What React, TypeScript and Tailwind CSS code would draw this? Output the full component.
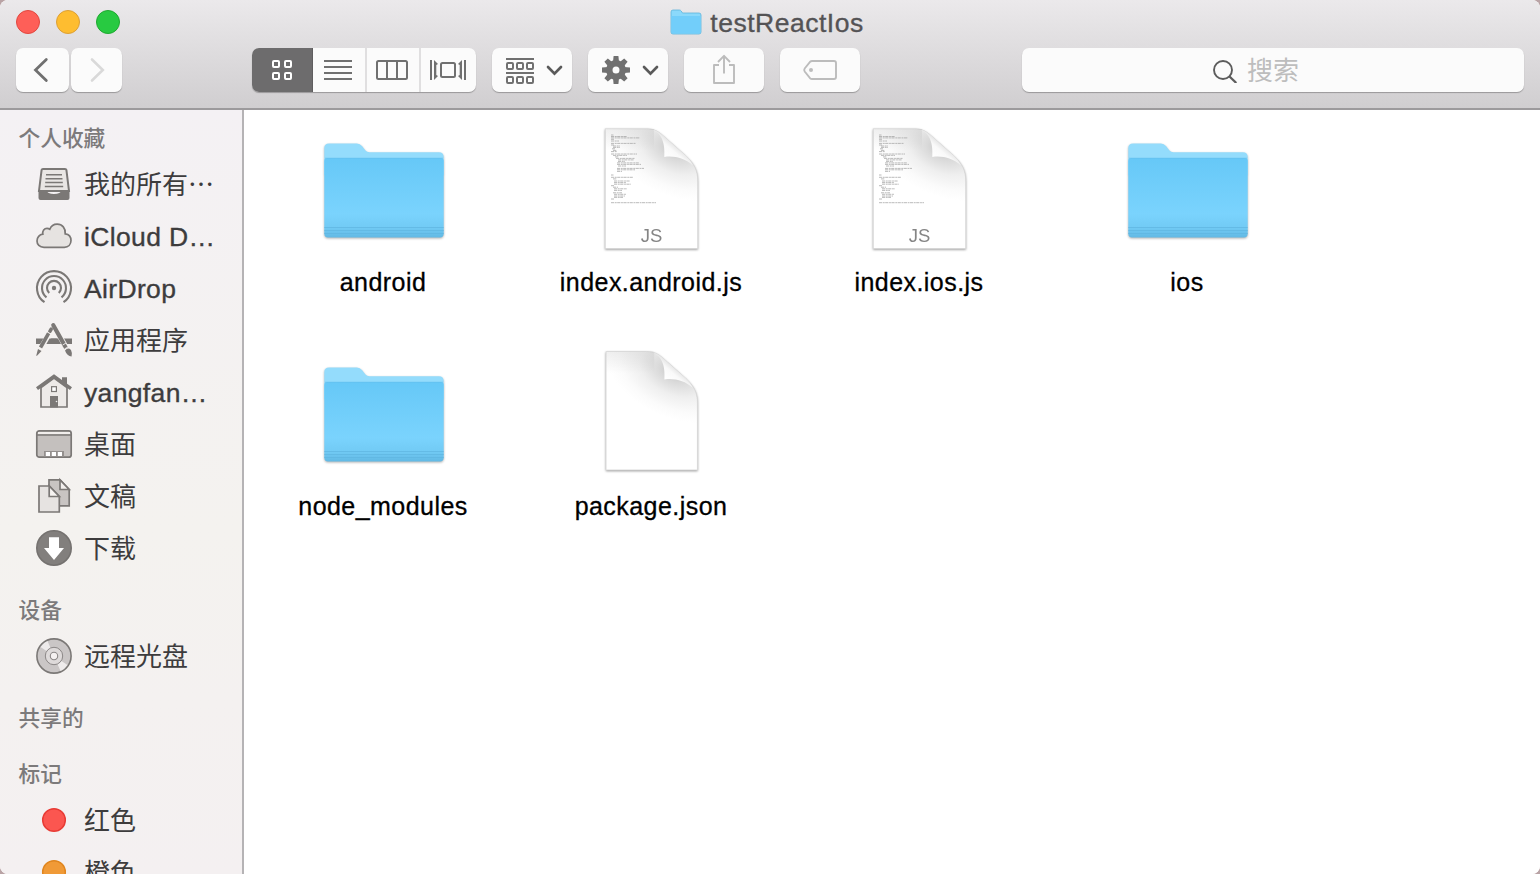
import type { ReactNode } from "react";

const DARK = "#707070";
const SIDE = "#7b7876";
const FONT = "font-['Liberation_Sans','Noto_Sans_CJK_SC',sans-serif]";
const CJK = "font-['Noto_Sans_CJK_SC',sans-serif]";

/* ---------- toolbar ---------- */

function ToolButton({ className, children, viewBox }: { className: string; viewBox: string; children: ReactNode }) {
  return (
    <button className={`h-11 shrink-0 overflow-hidden rounded-[7px] bg-[#fbfbfb] shadow-[0_1px_1px_rgba(0,0,0,0.28)] ${className}`}>
      <svg className="block h-full w-full" viewBox={viewBox} fill="none">
        {children}
      </svg>
    </button>
  );
}

function Segment({ className, children, viewBox }: { className: string; viewBox: string; children: ReactNode }) {
  return (
    <button className={`h-11 ${className}`}>
      <svg className="block h-full w-full" viewBox={viewBox} fill="none">
        {children}
      </svg>
    </button>
  );
}

function Chevron({ x }: { x: number }) {
  return <path d={`M${x - 6.5} 67 L${x} 73.6 L${x + 6.5} 67`} stroke="#5a5a5a" strokeWidth="2.7" strokeLinecap="round" />;
}

function Gear() {
  return (
    <g>
      {[0, 45, 90, 135, 180, 225, 270, 315].map((a) => (
        <path key={a} d="M613 62 L613.6 56 H618.4 L619 62 Z" fill={DARK} transform={`rotate(${a} 616 70)`} />
      ))}
      <circle cx="616" cy="70" r="6.7" stroke={DARK} strokeWidth="6.4" />
    </g>
  );
}

function Toolbar() {
  return (
    <header className="flex h-[110px] shrink-0 flex-col border-b-2 border-[#9c9a9c] bg-linear-to-b from-[#ebe9eb] to-[#d0ced0]">
      <div className="grid h-12 shrink-0 grid-cols-[1fr_auto_1fr] items-start px-4">
        <div className="flex gap-4 pt-[10px]">
          <span className="size-6 rounded-full border border-[#e2473f] bg-[#fe5f58]" />
          <span className="size-6 rounded-full border border-[#dda035] bg-[#febd30]" />
          <span className="size-6 rounded-full border border-[#1fa930] bg-[#28ca41]" />
        </div>
        <div className="mr-[6px] flex items-center gap-2 pt-[5px]">
          <svg className="mt-[-2px] h-[26px] w-[32px]" viewBox="0 0 32 26" fill="none">
            <path d="M1 3 Q1 1 3 1 H9.5 Q10.5 1 11.2 2 L12.5 4 H29 Q31 4 31 6 V23 Q31 25 29 25 H3 Q1 25 1 23 Z" fill="#8bd9fb" stroke="#5db4dc" strokeWidth=".8" />
            <path d="M1.4 7 H30.6 V23 Q30.6 24.6 29 24.6 H3 Q1.4 24.6 1.4 23 Z" fill="#72cefa" />
          </svg>
          <h1 className="text-[26.5px] leading-9 tracking-[0.5px] text-[#545355] [-webkit-text-stroke:0.35px_#545355]">testReactIos</h1>
        </div>
      </div>
      <div className="flex px-4">
        <div className="flex gap-[2px]">
          <ToolButton className="w-[53px]" viewBox="16 48 53 44">
            <path d="M46.3 59.5 L35.5 70 L46.3 80.5" stroke={DARK} strokeWidth="2.8" strokeLinecap="round" />
          </ToolButton>
          <ToolButton className="w-[51px]" viewBox="71 48 51 44">
            <path d="M92 59.5 L102.8 70 L92 80.5" stroke="#d9d9d9" strokeWidth="2.6" strokeLinecap="round" />
          </ToolButton>
        </div>
        <div className="ml-[130px] flex overflow-hidden rounded-[7px] bg-[#fbfbfb] shadow-[0_1px_1px_rgba(0,0,0,0.28)]">
          <Segment className="w-[61px] border-r border-[#5f5e5f] bg-[#6d6c6d]" viewBox="252 48 60 44">
            {[[273, 61], [285, 61], [273, 73], [285, 73]].map(([x, y]) => (
              <rect key={`${x}${y}`} x={x} y={y} width="6" height="6" rx="1" stroke="#fff" strokeWidth="2" />
            ))}
          </Segment>
          <Segment className="w-[54px] border-r-2 border-[#e0dfe0]" viewBox="313 48 52 44">
            <path d="M324 61H352M324 67H352M324 73H352M324 79H352" stroke={DARK} strokeWidth="2" />
          </Segment>
          <Segment className="w-[54px] border-r-2 border-[#e0dfe0]" viewBox="367 48 52 44">
            <rect x="377" y="61" width="30" height="18" rx="1.5" stroke={DARK} strokeWidth="2" />
            <path d="M387 61V79M397 61V79" stroke={DARK} strokeWidth="2" />
          </Segment>
          <Segment className="w-[55px]" viewBox="421 48 55 44">
            <path d="M431 60V80M465 60V80" stroke={DARK} strokeWidth="2" />
            <path d="M434 60 L438 64 L436.3 65 V75 L438 76 L434 80 Z M462 60 L458 64 L459.7 65 V75 L458 76 L462 80 Z" fill={DARK} />
            <rect x="441" y="63" width="14" height="14" rx="1.5" stroke={DARK} strokeWidth="2" />
          </Segment>
        </div>
        <div className="ml-4 flex gap-4">
          <ToolButton className="w-20" viewBox="492 48 80 44">
            <path d="M506 59H534M506 73H534" stroke={DARK} strokeWidth="2" />
            {[507, 517, 527].map((x) => (
              <g key={x} stroke={DARK} strokeWidth="2">
                <rect x={x} y="63" width="6" height="6" rx="1" />
                <rect x={x} y="77" width="6" height="6" rx="1" />
              </g>
            ))}
            <Chevron x={554.5} />
          </ToolButton>
          <ToolButton className="w-20" viewBox="588 48 80 44">
            <Gear />
            <Chevron x={650.5} />
          </ToolButton>
          <ToolButton className="w-20" viewBox="684 48 80 44">
            <path d="M719 65H714V83H734V65H729M724 73.5V56M718 62L724 55.8L730 62" stroke="#bcbcbc" strokeWidth="1.9" strokeLinejoin="round" />
          </ToolButton>
          <ToolButton className="w-20" viewBox="780 48 80 44">
            <path d="M812 61H834Q836 61 836 63V77Q836 79 834 79H812Q811 79 810 78.2L804.7 71.5Q803.6 70 804.7 68.5L810 61.8Q811 61 812 61Z" stroke="#bcbcbc" strokeWidth="1.9" />
            <circle cx="811" cy="70" r="2" fill="#bcbcbc" />
          </ToolButton>
        </div>
        <div className="ml-auto flex h-11 w-[502px] items-center rounded-[7px] bg-[#fbfbfb] pl-[190px] shadow-[0_1px_1px_rgba(0,0,0,0.28)]">
          <svg className="size-[26px]" viewBox="1211 56 26 26" fill="none" stroke="#5c5c5c">
            <circle cx="1222" cy="69" r="9" strokeWidth="1.9" />
            <path d="M1228.5 75.5L1235.3 82" strokeWidth="2.3" />
          </svg>
          <span className={`ml-[9px] pb-[2px] text-[26px] leading-[42px] text-[#bdbdbd] ${CJK}`}>搜索</span>
        </div>
      </div>
    </header>
  );
}

/* ---------- sidebar ---------- */

const icons: Record<string, ReactNode> = {
  tray: (
    <g>
      <path d="M9 4H31Q32.2 4 32.4 5L35 26H5L7.6 5Q7.8 4 9 4Z" fill="#e9e6e4" stroke={SIDE} strokeWidth="2" />
      <path d="M12 9.8H28M11.5 13.8H28.5M11.2 17.6H28.8M10.8 21.5H29.2" stroke={SIDE} strokeWidth="1.5" />
      <path d="M4.5 25H12Q13.5 29 20 29Q26.5 29 28 25H35.5V33Q35.5 35 33.5 35H6.5Q4.5 35 4.5 33Z" fill={SIDE} />
    </g>
  ),
  cloud: (
    <path d="M10 30.3C5.5 30.3 3 27.5 3 24C3 20.5 5.5 17.5 8.8 17.2C8.2 13.7 10.3 11.3 13 11.3C14.2 11.3 15 11.6 15.8 12.2C17 9 20 7.1 23.2 7.1C28.3 7.1 31.7 11.3 31.2 16.8C35 17.3 37 20.2 37 23.6C37 27.5 34.3 30.3 30.3 30.3Z" fill="#e6e3e1" stroke={SIDE} strokeWidth="1.7" />
  ),
  airdrop: (
    <g stroke={SIDE} strokeWidth="2.1">
      <path d="M10.5 33.2A17 17 0 1 1 29.5 33.2" />
      <path d="M12.5 28.4A12 12 0 1 1 27.5 28.4" />
      <path d="M15.2 24A7 7 0 1 1 24.8 24" />
      <circle cx="20" cy="19" r="2.2" fill={SIDE} stroke="none" />
    </g>
  ),
  apps: (
    <g>
      <path d="M2 17.5H38V23H2Z" fill={SIDE} />
      <path d="M19 4L34 31M20 6L4 33" stroke="#f5f2f0" strokeWidth="6.4" />
      <path d="M15.5 17.5H24L27 23H12.4Z" fill={SIDE} />
      <path d="M19.3 4.2L30 23.2" stroke={SIDE} strokeWidth="4.2" strokeLinecap="round" />
      <path d="M30 23.5L32.2 27.2" stroke={SIDE} strokeWidth="4" />
      <path d="M31 29.5Q34 25.8 37 29Q38.5 32 37.6 35.5Q33 35 31 29.5Z" fill={SIDE} />
      <path d="M17.2 8.2L15.9 10.4" stroke={SIDE} strokeWidth="3.6" strokeLinecap="round" />
      <path d="M14.7 12.2L6.5 26.5" stroke={SIDE} strokeWidth="3.6" />
      <path d="M4 28L7.5 30L3 34.8H2.2Z" fill={SIDE} />
      <path d="M28.5 24.2L32 22M30.4 28L34.2 25.8M13.4 11L17 13M4.8 26.6L8.5 28.7" stroke="#f5f2f0" strokeWidth=".9" />
    </g>
  ),
  home: (
    <g>
      <path d="M28 4.3H33V14L28 9.5Z" fill={SIDE} />
      <path d="M7 14.5L20 5L33 14.5V34H7Z" fill="#edeae8" stroke={SIDE} strokeWidth="1.7" />
      <path d="M3 15.7L20 3.4L37 15.7" stroke={SIDE} strokeWidth="3.4" />
      <rect x="17.6" y="13.7" width="4.8" height="4.8" fill="#fff" stroke={SIDE} strokeWidth="1.2" />
      <path d="M16 23H24V34.5H16Z" fill={SIDE} />
      <circle cx="22.5" cy="28.5" r=".8" fill="#eee" />
    </g>
  ),
  desktop: (
    <g>
      <rect x="2.8" y="5.8" width="34.4" height="26.4" rx="2.5" fill="#c4c0be" stroke={SIDE} strokeWidth="1.7" />
      <path d="M4 7H36V9H4Z" fill="#f1eeec" />
      <path d="M3 10H37" stroke={SIDE} strokeWidth="1.5" />
      <path d="M10 26H30V31.5H10Z" fill="#94908e" />
      <path d="M11.8 27H16V31H11.8ZM17.8 27H22V31H17.8ZM23.8 27H28V31H23.8Z" fill="#fff" />
    </g>
  ),
  docs: (
    <g stroke={SIDE} strokeWidth="1.7">
      <path d="M15 2.8H26L35.2 12.5V28.8H15Z" fill="#c8c4c2" />
      <path d="M26 2.8V12.5H35.2Z" fill="#f2efed" />
      <path d="M5 9H15.5L25.3 19.5V35H5Z" fill="#e6e3e1" />
      <path d="M15.2 9V19.5H25.3Z" fill="#f6f3f1" />
    </g>
  ),
  download: (
    <g>
      <circle cx="20" cy="19" r="17.2" fill="#827f7d" stroke="#757270" strokeWidth="1.6" />
      <path d="M15 8.3H25V19H30L20 31L10 19H15Z" fill="#fff" />
    </g>
  ),
  disc: (
    <g>
      <circle cx="20" cy="19" r="17.1" fill="#cac6c6" stroke={SIDE} strokeWidth="1.6" />
      <path d="M20 19L6.5 10Q9.5 5.5 13.5 4ZM20 19L33.5 28Q30.5 32.5 26.5 34Z" fill="#eeebeb" />
      <circle cx="20" cy="19" r="8.7" fill="#dedada" stroke="#8b8787" strokeWidth="1" />
      <circle cx="20" cy="19" r="3.7" fill="#f5f1f1" stroke="#8b8787" strokeWidth="1.1" />
    </g>
  ),
  red: <circle cx="20" cy="19" r="11.3" fill="#fb5650" stroke="#e83b35" strokeWidth="1.5" />,
  orange: <circle cx="20" cy="19" r="11.3" fill="#f09a37" stroke="#e0861f" strokeWidth="1.5" />,
};

type Item = { icon: string; label: string; latin?: boolean };
const sections: { title: string; items: Item[] }[] = [
  {
    title: "个人收藏",
    items: [
      { icon: "tray", label: "我的所有…" },
      { icon: "cloud", label: "iCloud D…", latin: true },
      { icon: "airdrop", label: "AirDrop", latin: true },
      { icon: "apps", label: "应用程序" },
      { icon: "home", label: "yangfan…", latin: true },
      { icon: "desktop", label: "桌面" },
      { icon: "docs", label: "文稿" },
      { icon: "download", label: "下载" },
    ],
  },
  { title: "设备", items: [{ icon: "disc", label: "远程光盘" }] },
  { title: "共享的", items: [] },
  { title: "标记", items: [{ icon: "red", label: "红色" }, { icon: "orange", label: "橙色" }] },
];

function Sidebar() {
  return (
    <aside className="flex w-[244px] shrink-0 flex-col gap-[14px] overflow-hidden border-r-2 border-[#b5b3b5] bg-linear-to-b from-[#f4f1f4] via-[#f4f2ef] via-55% to-[#f4f0f1] pt-[7px]">
      {sections.map((s) => (
        <section key={s.title} className="shrink-0">
          <h2 className={`h-[42px] pl-[18.5px] text-[21.7px] leading-[39px] font-medium text-[#7c7a7b] ${CJK}`}>{s.title}</h2>
          <ul>
            {s.items.map((it) => (
              <li key={it.label} className="flex h-[52px] items-center pl-[34px]">
                <svg className="size-10 shrink-0" viewBox="0 0 40 40" fill="none">
                  {icons[it.icon]}
                </svg>
                <span
                  className={
                    it.latin
                      ? "ml-[10px] text-[26.5px] leading-[52px] tracking-[0.35px] whitespace-nowrap text-[#3d3c3d] [-webkit-text-stroke:0.35px_#3d3c3d]"
                      : "ml-[10px] pb-[5px] font-['Noto_Sans_CJK_SC',sans-serif] text-[26px] leading-[46px] whitespace-nowrap text-[#3d3c3d]"
                  }
                >
                  {it.label}
                </span>
              </li>
            ))}
          </ul>
        </section>
      ))}
    </aside>
  );
}

/* ---------- files ---------- */

function FolderIcon() {
  return (
    <svg className="size-32 drop-shadow-[0_1px_1px_rgba(0,0,0,0.3)]" viewBox="0 0 128 128" fill="none">
      <defs>
        <linearGradient id="folderFront" x1="0" y1="0" x2="0" y2="1">
          <stop offset="0" stopColor="#66c8f7" />
          <stop offset=".7" stopColor="#7ad3fd" />
          <stop offset=".87" stopColor="#72cbf5" />
          <stop offset="1" stopColor="#62b9e4" />
        </linearGradient>
      </defs>
      <path d="M4.3 23Q4.3 18.5 9 18.5H37Q40 18.5 42 21L45.5 25.5Q47 27.3 49.5 27.3H119Q123.7 27.3 123.7 32V50H4.3Z" fill="#94dcfc" />
      <path d="M4.3 36Q4.3 33 7.3 33H120.7Q123.7 33 123.7 36V108.5Q123.7 112.5 120 112.5H8Q4.3 112.5 4.3 108.5Z" fill="url(#folderFront)" />
      <path d="M5 33.2H123" stroke="#63c0ec" strokeWidth=".6" />
      <path d="M4.3 102.5H123.7M4.3 105.5H123.7M4.3 108.5H123.7" stroke="#5fb5e0" strokeWidth=".7" />
    </svg>
  );
}

/* x, y, width of each line in the miniature source listing */
const codeLines = [
  [23, 10, 2.5], [23, 11.5, 16], [23, 12.9, 29], [23, 14.3, 3], [23, 16, 8], [23, 18.4, 25],
  [23, 20, 3], [25, 21, 7], [25, 22.4, 7], [24, 23.8, 3], [25, 25.4, 4], [23, 26.6, 6],
  [23, 29, 26], [25, 30.4, 14], [27, 31.9, 4], [28, 33.4, 19], [30, 34.9, 16], [30, 36.4, 7], [29, 37.9, 22], [29, 39.4, 24],
  [30, 41, 8], [29, 43.4, 27], [29, 44.8, 18], [29, 46.4, 5], [23, 50, 2.5],
  [23, 52.3, 22], [25, 53.9, 4], [26, 56, 16], [26, 57.6, 12], [26, 59.2, 17], [23, 60.7, 3], [25, 62.2, 5],
  [26, 63.8, 13], [26, 65.4, 8], [25, 67.8, 9], [26, 69.3, 12], [26, 71, 11], [26, 72.4, 9], [23, 74, 3], [23, 77.7, 45],
];

function DocIcon({ js }: { js?: boolean }) {
  return (
    <svg className="size-32 drop-shadow-[0_1px_1.2px_rgba(0,0,0,0.38)]" viewBox={js ? "0 0 128 128" : "-1 1.2 129.5 129.5"} fill="none">
      <defs>
        <radialGradient id="curlShade" gradientUnits="userSpaceOnUse" cx="0" cy="0" r="1" gradientTransform="translate(86 24) rotate(25) scale(74 46)">
          <stop offset="0" stopColor="#c4c4c4" />
          <stop offset=".22" stopColor="#dadada" />
          <stop offset=".5" stopColor="#efefef" />
          <stop offset=".8" stopColor="#fbfbfb" />
          <stop offset="1" stopColor="#fff" />
        </radialGradient>
        <linearGradient id="curl" gradientUnits="userSpaceOnUse" x1="78" y1="32" x2="88" y2="20">
          <stop offset="0" stopColor="#fff" />
          <stop offset=".6" stopColor="#f9f9f9" />
          <stop offset="1" stopColor="#e2e2e2" />
        </linearGradient>
        <linearGradient id="topShade" x1="0" y1="0" x2="0" y2="1">
          <stop offset="0" stopColor="#000" stopOpacity=".06" />
          <stop offset="1" stopColor="#000" stopOpacity="0" />
        </linearGradient>
      </defs>
      <path d="M17.3 3.7H58C67 3.7 71 7 76 11.5L98 31C106 38.5 109.7 45 109.7 56V123.5H17.3Z" fill="url(#curlShade)" stroke="#d6d6d6" strokeWidth=".7" />
      <path d="M17.5 4H66V26H17.5Z" fill="url(#topShade)" />
      <path d="M64 4.4C72 7.5 77.5 15 76.3 32C86 30.5 97 33 105 40.5Q102.5 35 98 31L76 11.5Q70 6 64 4.4Z" fill="url(#curl)" />
      {js && (
        <g>
          {codeLines.map(([x, y, w], i) => (
            <path key={i} d={`M${x} ${y}h${w}`} stroke="#a3a3a3" strokeWidth=".75" strokeDasharray="3.2 .7 1.8 .5" />
          ))}
          <text x="63.5" y="116.5" textAnchor="middle" fontSize="18.5" fill="#858585" className="font-['Liberation_Sans',sans-serif]">
            JS
          </text>
        </g>
      )}
    </svg>
  );
}

const files = [
  { name: "android", kind: "folder" },
  { name: "index.android.js", kind: "js" },
  { name: "index.ios.js", kind: "js" },
  { name: "ios", kind: "folder" },
  { name: "node_modules", kind: "folder" },
  { name: "package.json", kind: "doc" },
];

export default function App() {
  return (
    <div className="h-[874px] w-[1540px] overflow-hidden bg-[#b9a3a5]">
      <div className={`flex h-full w-full flex-col overflow-hidden rounded-[8px] bg-white ${FONT}`}>
        <Toolbar />
        <div className="flex min-h-0 flex-1">
          <Sidebar />
          <main className="flex-1 bg-white pt-[15px] pl-[6px]">
            <div className="grid grid-cols-[repeat(4,268px)] auto-rows-[224px]">
              {files.map((f) => (
                <figure key={f.name} className="flex flex-col items-center">
                  {f.kind === "folder" ? <FolderIcon /> : <DocIcon js={f.kind === "js"} />}
                  <figcaption className="mt-[11px] mr-[2px] text-[25px] leading-9 tracking-[0.45px] text-black [-webkit-text-stroke:0.3px_#000]">
                    {f.name}
                  </figcaption>
                </figure>
              ))}
            </div>
          </main>
        </div>
      </div>
    </div>
  );
}
